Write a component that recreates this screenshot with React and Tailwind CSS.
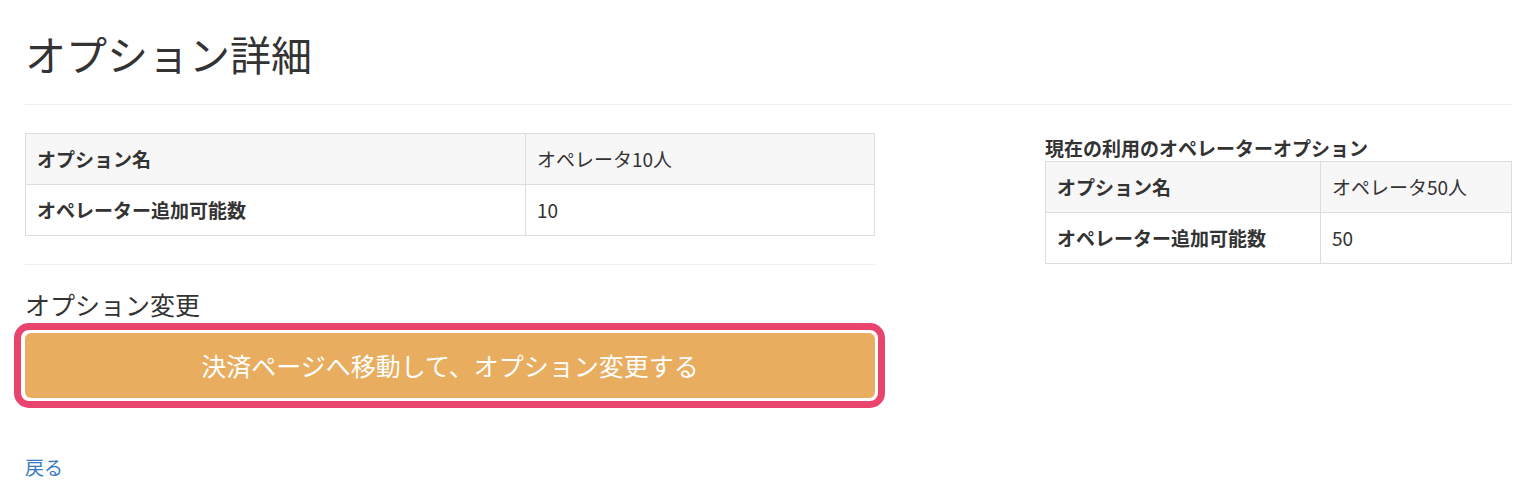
import React from 'react';

const labelCell = 'border border-[#dddddd] px-[11px] py-[11px] leading-[28px] font-bold text-left align-middle';
const valueCell = 'border border-[#dddddd] px-[11px] py-[11px] leading-[28px] text-left align-middle';

function OptionTable({ name, count, labelWidth }) {
  return (
    <table className="w-full border-collapse text-[19px] text-[#333333]">
      <tbody>
        <tr className="bg-[#f7f7f7]">
          <td className={labelCell} style={{ width: labelWidth }}>オプション名</td>
          <td className={valueCell}>{name}</td>
        </tr>
        <tr className="bg-white">
          <td className={labelCell}>オペレーター追加可能数</td>
          <td className={valueCell}>{count}</td>
        </tr>
      </tbody>
    </table>
  );
}

export default function App() {
  return (
    <div className="min-h-screen bg-white font-['Noto_Sans_CJK_JP','Noto_Sans',sans-serif] text-[#333333] pl-[25px] pr-[24px]">
      {/* Page header */}
      <div className="pt-[31px] pb-[28px] border-b border-[#eeeeee]">
        <h1 className="text-[41px] leading-[45px] font-normal text-[#333333]">オプション詳細</h1>
      </div>

      <div className="flex justify-between mt-[28px]">
        {/* Left column */}
        <div className="w-[850px]">
          <OptionTable name="オペレータ10人" count="10" labelWidth="500px" />

          <div className="mt-[28px] border-t border-[#eeeeee]" />

          <h4 className="mt-[26px] text-[25px] leading-[27px] font-normal">オプション変更</h4>

          <div className="mt-[5px] ml-[-11px] mr-[-10px] border-[7px] border-[#e9446e] rounded-[15px] bg-white pl-[4px] pr-[3px] py-[3px]">
            <button className="w-full h-[65px] rounded-[6px] bg-[#e8ad5f] text-white text-[25px] font-normal flex items-center justify-center">
              決済ページへ移動して、オプション変更する
            </button>
          </div>

          <div className="mt-[45px]">
            <a href="#" className="text-[19px] leading-[27px] text-[#3a7bbf]">戻る</a>
          </div>
        </div>

        {/* Right column */}
        <div className="w-[467px]">
          <div className="h-[28px] flex items-center text-[19px] font-bold leading-none">
            現在の利用のオペレーターオプション
          </div>
          <OptionTable name="オペレータ50人" count="50" labelWidth="275px" />
        </div>
      </div>
    </div>
  );
}
